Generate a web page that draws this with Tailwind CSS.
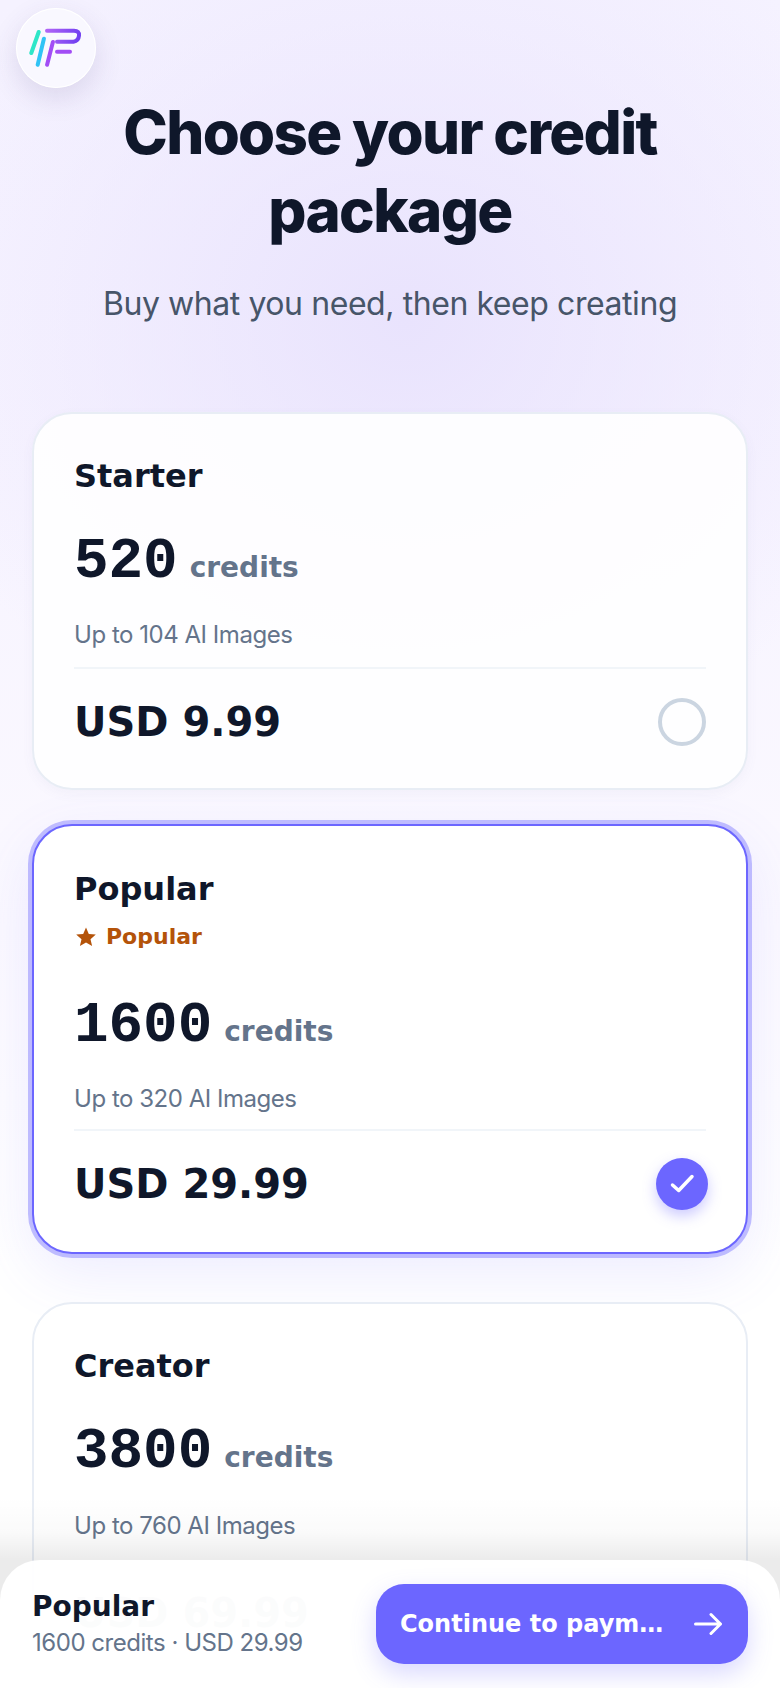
<!DOCTYPE html>
<html lang="en">
<head>
    <meta charset="UTF-8">
    <meta name="viewport" content="width=device-width, initial-scale=1.0">
    <title>Choose your credit package</title>
    <script src="https://cdn.jsdelivr.net/npm/@tailwindcss/browser@4"></script>
</head>
<body class="font-['Inter',sans-serif]">
    <div class="relative w-[780px] h-[1688px] overflow-hidden bg-[radial-gradient(ellipse_520px_460px_at_52%_19%,#e9e3fd_0%,rgba(233,227,253,0)_100%),linear-gradient(180deg,#f5f2ff_0%,#f7f4ff_30%,#fbf9ff_55%,#ffffff_75%)]">

        <!-- logo -->
        <div class="absolute left-4 top-2 w-20 h-20 rounded-full bg-[#f9f8ff] flex items-center justify-center shadow-[0_10px_28px_rgba(70,60,120,0.14),inset_0_0_0_1px_#ffffff]">
            <svg class="w-16 h-16 blur-[0.6px]" viewBox="0 0 64 64" fill="none" stroke-width="4" stroke-linecap="round" stroke-linejoin="round">
                <defs>
                    <linearGradient id="logoPurple" gradientUnits="userSpaceOnUse" x1="21" y1="14" x2="56" y2="26">
                        <stop offset="0" stop-color="#b366f7"/>
                        <stop offset="1" stop-color="#6d3df0"/>
                    </linearGradient>
                </defs>
                <path d="M14.700 16 L7.300 37" stroke="#2ee6c8"/>
                <path d="M19.900 22.700 L13.700 48.700" stroke="#30c3f5"/>
                <path d="M28.900 26 L23.100 48.700" stroke="#a24df5"/>
                <path d="M23 14.700 H50 Q55.500 15 55 19.500 Q54.500 25 49.500 25.700 H33" stroke="url(#logoPurple)"/>
                <path d="M33 35.700 H46" stroke="#a24df5"/>
            </svg>
        </div>

        <header class="pt-[93px] px-8 text-center">
            <h1 class="text-[60px] leading-[78px] font-extrabold tracking-[-0.028em] text-[#0f172a] mx-auto max-w-[620px]">Choose your credit package</h1>
            <p class="mt-[33px] text-[32px] leading-[44px] tracking-[-0.43px] text-[#475569]">Buy what you need, then keep creating</p>
        </header>

        <main class="mt-[86px] px-8 flex flex-col">
            <!-- Starter -->
            <section class="h-[378px] px-[40px] pt-[40px] rounded-[40px] border-2 border-[#e8edf5] bg-white/90 shadow-[0_4px_12px_rgba(100,90,160,0.05)]">
                <h2 class="font-['DejaVu_Sans',sans-serif] font-bold text-[32px] leading-[44px] text-[#0f172a]">Starter</h2>
                <div class="mt-[28px] flex items-baseline gap-3">
                    <span class="font-['Liberation_Mono',monospace] font-bold text-[57.6px] leading-[72px] text-[#0f172a]">520</span>
                    <span class="font-['DejaVu_Sans',sans-serif] font-bold text-[28px] text-[#64748b]">credits</span>
                </div>
                <p class="mt-[20px] text-[24px] leading-[34px] tracking-[-0.47px] text-[#64748b]">Up to 104 AI Images</p>
                <div class="mt-[15px] flex items-center justify-between border-t-2 border-[#f1f5f9] pt-[28px]">
                    <span class="font-['DejaVu_Sans',sans-serif] font-bold text-[40px] leading-[50px] text-[#0f172a]">USD 9.99</span>
                    <span class="w-12 h-12 rounded-full border-4 border-[#cbd5e1]"></span>
                </div>
            </section>

            <!-- Popular, selected -->
            <section class="mt-[34px] h-[430px] px-[40px] pt-[41px] rounded-[40px] border-2 border-[#6c66ff] bg-white ring-4 ring-[#6c66ff]/40 shadow-[0_20px_60px_rgba(108,102,255,0.12)]">
                <h2 class="font-['DejaVu_Sans',sans-serif] font-bold text-[32px] leading-[44px] text-[#0f172a]">Popular</h2>
                <div class="mt-[10px] flex items-center gap-2 text-[#b45309]">
                    <svg class="w-6 h-6 fill-current" viewBox="0 0 24 24"><path d="M12 2.500 L14.800 9 L21.800 9.600 L16.500 14.200 L18.100 21 L12 17.400 L5.900 21 L7.500 14.200 L2.200 9.600 L9.200 9 Z"/></svg>
                    <span class="font-['DejaVu_Sans',sans-serif] font-bold text-[22px] leading-[32px]">Popular</span>
                </div>
                <div class="mt-[37px] flex items-baseline gap-3">
                    <span class="font-['Liberation_Mono',monospace] font-bold text-[57.6px] leading-[72px] text-[#0f172a]">1600</span>
                    <span class="font-['DejaVu_Sans',sans-serif] font-bold text-[28px] text-[#64748b]">credits</span>
                </div>
                <p class="mt-[20px] text-[24px] leading-[34px] tracking-[-0.47px] text-[#64748b]">Up to 320 AI Images</p>
                <div class="mt-[13px] flex items-center justify-between border-t-2 border-[#f1f5f9] pt-[27px]">
                    <span class="font-['DejaVu_Sans',sans-serif] font-bold text-[40px] leading-[50px] text-[#0f172a]">USD 29.99</span>
                    <span class="w-[52px] h-[52px] -mr-[2px] rounded-full bg-[#6c66ff] flex items-center justify-center shadow-[0_6px_14px_rgba(108,102,255,0.35)]">
                        <svg class="w-7 h-7" viewBox="0 0 28 28" fill="none" stroke="#fff" stroke-width="3.500" stroke-linecap="round" stroke-linejoin="round"><path d="M4.500 15 L10.700 20.500 L24 6.500"/></svg>
                    </span>
                </div>
            </section>

            <!-- Creator -->
            <section class="mt-[48px] h-[378px] px-[40px] pt-[40px] rounded-[40px] border-2 border-[#e8edf5] bg-white">
                <h2 class="font-['DejaVu_Sans',sans-serif] font-bold text-[32px] leading-[44px] text-[#0f172a]">Creator</h2>
                <div class="mt-[28px] flex items-baseline gap-3">
                    <span class="font-['Liberation_Mono',monospace] font-bold text-[57.6px] leading-[72px] text-[#0f172a]">3800</span>
                    <span class="font-['DejaVu_Sans',sans-serif] font-bold text-[28px] text-[#64748b]">credits</span>
                </div>
                <p class="mt-[21px] text-[24px] leading-[34px] tracking-[-0.47px] text-[#64748b]">Up to 760 AI Images</p>
                <div class="mt-[17px] flex items-center justify-between border-t-2 border-[#f1f5f9] pt-[26px]">
                    <span class="font-['DejaVu_Sans',sans-serif] font-bold text-[40px] leading-[50px] text-[#0f172a]">USD 69.99</span>
                </div>
            </section>
        </main>

        <!-- fade above the bottom bar -->
        <div class="absolute left-0 right-0 bottom-[88px] h-[104px] bg-[linear-gradient(180deg,rgba(0,0,0,0)_0%,rgba(0,0,0,0.02)_35%,rgba(0,0,0,0.08)_62%,rgba(0,0,0,0.08)_100%)]"></div>

        <!-- bottom bar -->
        <footer class="absolute left-0 right-0 bottom-0 h-[128px] rounded-t-[40px] bg-white/[0.985] pl-8 pr-8 flex items-center justify-between">
            <div>
                <div class="font-['DejaVu_Sans',sans-serif] font-bold text-[28px] leading-[34px] text-[#0f172a]">Popular</div>
                <div class="mt-[3px] text-[24px] leading-[32px] tracking-[-0.47px] text-[#64748b]">1600 credits · USD 29.99</div>
            </div>
            <button class="w-[372px] h-20 rounded-[28px] bg-[#6c66ff] pl-6 pr-[26px] flex items-center justify-between text-white shadow-[0_10px_24px_rgba(108,102,255,0.25)]">
                <span class="font-['DejaVu_Sans',sans-serif] font-bold text-[24px] whitespace-nowrap">Continue to paym…</span>
                <svg class="w-7 h-7" viewBox="0 0 28 28" fill="none" stroke="#fff" stroke-width="3" stroke-linecap="round" stroke-linejoin="round"><path d="M1.500 14 H26.500 M17 4.500 L26.500 14 L17 23.500"/></svg>
            </button>
        </footer>
    </div>
</body>
</html>
